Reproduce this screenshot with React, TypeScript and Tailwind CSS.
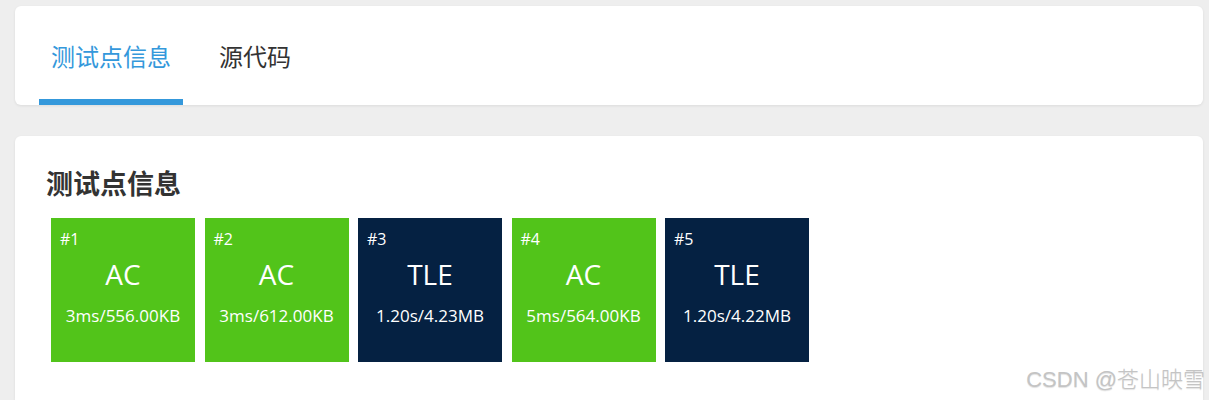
const cases = [
  { id: 1, status: 'AC', info: '3ms/556.00KB' },
  { id: 2, status: 'AC', info: '3ms/612.00KB' },
  { id: 3, status: 'TLE', info: '1.20s/4.23MB' },
  { id: 4, status: 'AC', info: '5ms/564.00KB' },
  { id: 5, status: 'TLE', info: '1.20s/4.22MB' },
];

const font = { fontFamily: '"Open Sans", "Noto Sans CJK SC", sans-serif' };

export default function App() {
  return (
    <div className="relative flex h-[400px] flex-col overflow-hidden bg-[#eeeeee] pt-[6px] pl-[15px] pr-[6px]" style={font}>
      {/* tabs card */}
      <div className="flex h-[99px] shrink-0 rounded-[6px] bg-white px-6 shadow-[0_1px_3px_rgba(0,0,0,0.08)]">
        <div className="flex h-full items-center border-b-[6px] border-[#3498db] px-3 pt-2 text-[24px] text-[#3498db]">
          测试点信息
        </div>
        <div className="ml-6 flex h-full items-center border-b-[6px] border-transparent px-3 pt-2 text-[24px] text-[#333]">
          源代码
        </div>
      </div>

      {/* test points card */}
      <div className="mt-[31px] flex-1 rounded-t-[6px] bg-white px-[31px] pt-[28px] shadow-[0_1px_3px_rgba(0,0,0,0.08)]">
        <h2 className="mb-[15px] text-[27px] font-bold leading-[39px] text-[#333]">测试点信息</h2>
        <div className="flex gap-[9.5px] pl-[5px]">
          {cases.map((c) => (
            <div
              key={c.id}
              className={
                'flex h-[144px] w-[144px] flex-col pt-[11px] text-white ' +
                (c.status === 'AC' ? 'bg-[#52c41a]' : 'bg-[#052142]')
              }
            >
              <div className="pl-[9px] text-[16px] leading-5">#{c.id}</div>
              <div className="mt-[6px] text-center text-[28px] leading-[38px]">{c.status}</div>
              <div className="mt-[11px] text-center text-[17px] leading-6">{c.info}</div>
            </div>
          ))}
        </div>
      </div>

      <div className="absolute bottom-[6px] right-[4px] text-[22px] font-light leading-[28px] text-[#c4c4c4] [text-shadow:0_1px_1px_rgba(0,0,0,0.12)]" style={{ fontFamily: '"Liberation Sans", "Noto Sans CJK SC", sans-serif' }}>
        CSDN @苍山映雪
      </div>
    </div>
  );
}
